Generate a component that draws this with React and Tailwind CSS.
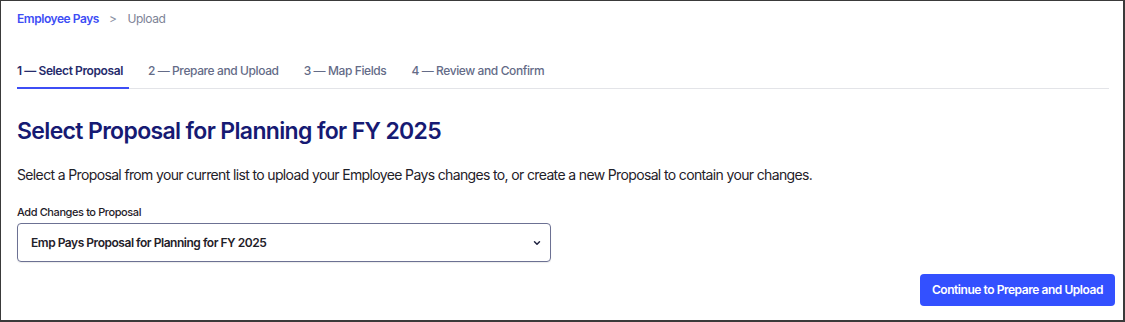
import React from 'react';

export default function App() {
  const tabs = ['1 — Select Proposal', '2 — Prepare and Upload', '3 — Map Fields', '4 — Review and Confirm'];

  return (
    <div
      className="w-[1125px] h-[322px] bg-white border-l border-t border-r-2 border-b-2 border-[#3a3a3a] flex flex-col pl-4 pr-[8px]"
      style={{ fontFamily: 'Inter, "Noto Sans", sans-serif' }}
    >
      {/* Breadcrumb */}
      <div className="flex items-center text-[12px] tracking-[-0.45px] mt-[10px] h-[16px] leading-[16px]">
        <span className="font-semibold text-[#3d4df5]">Employee Pays</span>
        <span className="text-[#8a8fa3] ml-[10px]">&gt;</span>
        <span className="text-[#7d8396] ml-[11px]">Upload</span>
      </div>

      {/* Steps */}
      <div className="flex gap-[19px] border-b border-[#e3e4e8] mt-[36px] mr-[6px]">
        {tabs.map((tab, i) => (
          <div
            key={tab}
            className={
              i === 0
                ? 'pr-[6px] pb-[8px] text-[12px] leading-[16px] tracking-[-0.4px] font-semibold text-[#262b6b] border-b-2 border-[#3d4df5] -mb-px'
                : 'pr-[6px] pb-[8px] text-[12px] leading-[16px] tracking-[-0.4px] font-medium text-[#646b87]'
            }
          >
            {tab}
          </div>
        ))}
      </div>

      {/* Heading */}
      <h1 className="mt-[28px] text-[23px] font-semibold text-[#161a73] leading-[28px] tracking-[-0.65px]">
        Select Proposal for Planning for FY 2025
      </h1>
      <p className="mt-[20px] text-[14px] text-[#1f2129] leading-[20px] tracking-[-0.64px]">
        Select a Proposal from your current list to upload your Employee Pays changes to, or create a new Proposal to contain your changes.
      </p>

      {/* Select */}
      <label className="mt-[19px] text-[11px] font-medium text-[#1f2129] leading-[16px] tracking-[-0.4px]">Add Changes to Proposal</label>
      <div className="mt-[3px] w-[534px] h-[39px] border border-[#6c7193] rounded-[4px] flex items-center justify-between pl-[13px] pr-[8px] shadow-[0_1px_1px_rgba(0,0,0,0.08)]">
        <span className="text-[12px] font-semibold text-[#1f2129] tracking-[-0.47px]">Emp Pays Proposal for Planning for FY 2025</span>
        <svg width="10" height="10" viewBox="0 0 24 24" fill="none" stroke="#1f2340" strokeWidth="3.5" strokeLinecap="round" strokeLinejoin="round">
          <path d="m6 9 6 6 6-6" />
        </svg>
      </div>

      {/* Action */}
      <div className="flex justify-end mt-[12px]">
        <button className="h-[32px] px-[12px] bg-[#3350ff] text-white text-[12px] font-semibold rounded-[4px] tracking-[-0.45px]">
          Continue to Prepare and Upload
        </button>
      </div>
    </div>
  );
}
